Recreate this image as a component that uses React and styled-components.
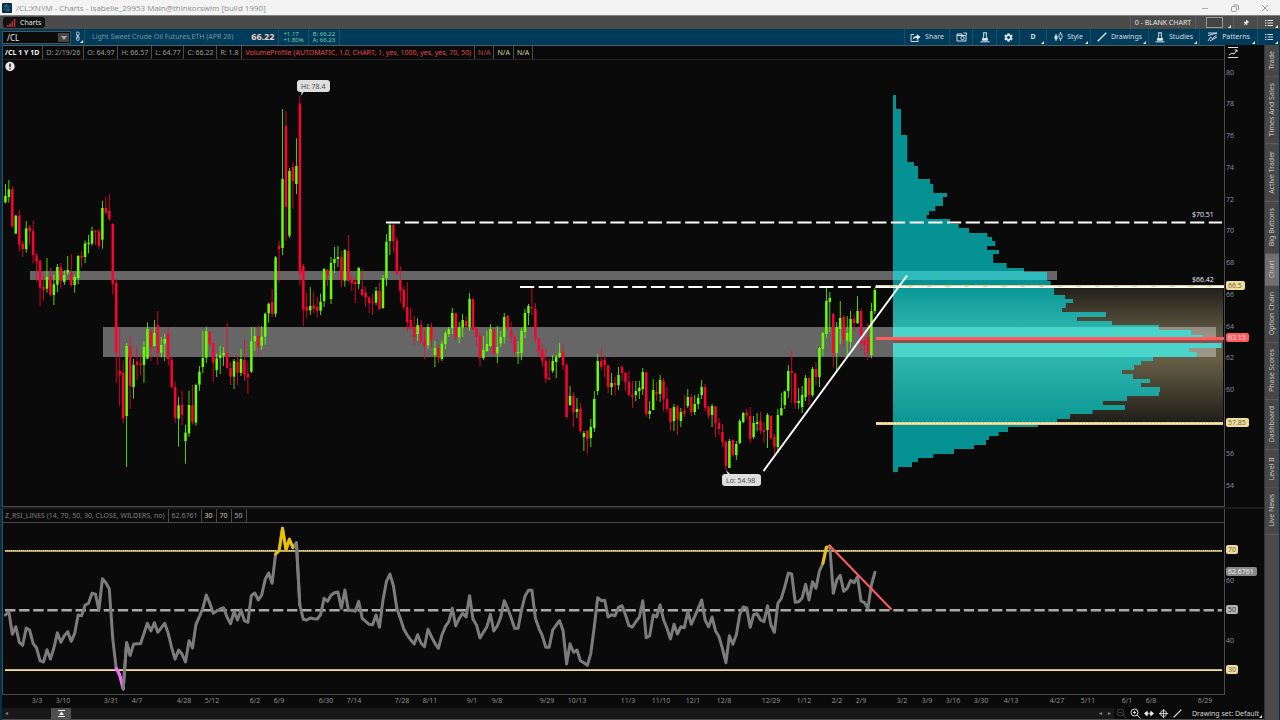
import React, { useState } from 'react';
import styled, { createGlobalStyle, css } from 'styled-components';
import { FaCog, FaThumbtack, FaListUl } from 'react-icons/fa';

const GlobalStyle = createGlobalStyle`
  * { box-sizing: border-box; }
  body {
    margin: 0;
    background: #0a0a0a;
    font-family: 'Noto Sans', 'Open Sans', sans-serif;
    font-size: 7px;
    line-height: 10px;
    color: #c8c8c8;
  }
  button, input {
    font: inherit;
    color: inherit;
    margin: 0;
    padding: 0;
    border: 0;
    background: none;
  }
  svg text { font-family: 'Open Sans', 'Noto Sans', sans-serif; }
`;

const Window = styled.div`
  display: flex;
  flex-direction: column;
  height: 100vh;
  overflow: hidden;
`;

const TitleBar = styled.header`
  display: flex;
  align-items: center;
  height: 15px;
  padding-left: 2px;
  background: #f3f3f3;
  color: #8c8c8c;
`;

const AppTitle = styled.h1`
  flex: 1;
  margin: 0 0 0 4px;
  font-family: 'Open Sans', sans-serif;
  font-size: 8px;
  font-weight: 400;
  line-height: 12px;
  white-space: nowrap;
`;

const WindowButton = styled.button`
  display: flex;
  align-items: center;
  justify-content: center;
  width: 30px;
  height: 15px;
`;

const TabBar = styled.nav`
  display: flex;
  align-items: stretch;
  height: 14px;
  border-top: 1px solid #7c8480;
  background: #4b4b4b;
`;

const ChartsTab = styled.button`
  display: flex;
  align-items: center;
  gap: 4px;
  height: 11px;
  margin: 1px 2px 0 3px;
  padding: 0 4px;
  border-radius: 3px;
  background: #121212;
  color: #e4e4e4;
`;

const Spacer = styled.div`
  flex: 1;
`;

const TabBarButton = styled.button`
  position: relative;
  display: flex;
  align-items: center;
  justify-content: center;
  width: ${(p) => p.$width}px;
  border-left: 1px solid #5c5c5c;
  color: #e2e2e2;
  white-space: nowrap;
`;

const Toolbar = styled.div`
  display: flex;
  align-items: stretch;
  height: 16px;
  background: #003b59;
  color: #b9c9d1;
`;

const SymbolField = styled.div`
  display: flex;
  width: 69px;
  height: 13px;
  margin: 2px 0 0 2px;
  padding: 1px;
  border: 1px solid #45555e;
  background: #0b0b0b;
`;

const SymbolInput = styled.input`
  flex: 1;
  min-width: 0;
  padding-left: 3px;
  color: #e8e8e8;
  font-size: 8px;
  outline: 0;
`;

const DropButton = styled.button`
  display: flex;
  align-items: center;
  justify-content: center;
  width: 11px;
  background: #464646;
`;

const ToolCell = styled.div`
  display: flex;
  flex-direction: column;
  justify-content: center;
  padding: 0 ${(p) => p.$right || 4}px 0 ${(p) => p.$left || 4}px;
  border-right: 1px solid ${(p) => (p.$open ? 'transparent' : '#14506c')};
  white-space: nowrap;
`;

const Instrument = styled.span`
  color: #7795a5;
`;

const LastPrice = styled.strong`
  color: #f3cdc8;
  font-size: 9px;
  line-height: 12px;
`;

const Quote = styled.span`
  color: #76cdb3;
  font-size: 6px;
  line-height: 6px;
`;

const ToolButton = styled.button`
  position: relative;
  display: flex;
  align-items: center;
  justify-content: center;
  gap: 4px;
  width: ${(p) => p.$width}px;
  border-left: 1px solid #14506c;
  color: #d3dde2;
  white-space: nowrap;
`;

const Corner = styled.span`
  position: absolute;
  right: 2px;
  bottom: 1px;
  border-left: 3px solid transparent;
  border-bottom: 3px solid #e6e6e6;
`;

const Workspace = styled.main`
  display: flex;
  flex: 1;
  min-height: 0;
  border-left: 2px solid #00304a;
  border-right: 1px solid #00304a;
`;

const ChartColumn = styled.section`
  display: flex;
  flex: 1;
  flex-direction: column;
  min-width: 0;
`;

const Panel = styled.div`
  display: flex;
  flex: ${(p) => p.$grow} 1 0;
  min-height: 0;
`;

const PlotColumn = styled.div`
  display: flex;
  flex: 1;
  flex-direction: column;
  min-width: 0;
  border: solid #4c4c4c;
  border-width: 0 1px 1px 1px;
`;

const Splitter = styled.div`
  height: 2px;
  background: #1c1c1c;
`;

const Legend = styled.div`
  display: flex;
  height: ${(p) => p.$height}px;
  border-bottom: 1px solid ${(p) => p.$line};
  ${(p) => p.$topLine && css`border-top: 1px solid #50606a;`}
`;

const LegendCell = styled.span`
  padding: 1px 3px 0 ${(p) => (p.$first ? 2 : 3)}px;
  border-right: 1px solid #4a4a4a;
  color: ${(p) => p.$color || '#9a9a9a'};
  font-weight: ${(p) => (p.$bold ? 700 : 400)};
  line-height: 11px;
  white-space: nowrap;
`;

const PlotSvg = styled.svg`
  display: block;
  flex: 1;
  width: 100%;
  min-height: 0;
`;

const AxisSvg = styled.svg`
  display: block;
  width: 39px;
  height: 100%;
`;

const TimeRow = styled.div`
  display: flex;
  height: 13px;
  padding: 0 40px 0 1px;
`;

const BottomBar = styled.footer`
  display: flex;
  align-items: center;
  height: 12px;
  border-bottom: 1px solid #4c4c4c;
`;

const ScrollTrack = styled.div`
  display: flex;
  flex: 1;
  align-items: center;
  height: 11px;
  background: #191919;
`;

const ScrollArrow = styled.button`
  width: 9px;
  height: 11px;
  color: #888;
  font-size: 6px;
  line-height: 9px;
`;

const ScrollThumb = styled.button`
  display: flex;
  align-items: center;
  justify-content: center;
  width: 20px;
  height: 11px;
  margin-left: 40px;
  background: #4f4f4f;
`;

const BottomButton = styled.button`
  display: flex;
  align-items: center;
  justify-content: center;
  width: 14px;
  height: 11px;
`;

const DrawingSet = styled.button`
  position: relative;
  width: 80px;
  height: 11px;
  padding-right: 5px;
  color: #d4d4d4;
  text-align: right;
  white-space: nowrap;
`;

const Sidebar = styled.aside`
  display: flex;
  flex-direction: column;
  width: 15px;
  border-left: 1px solid #333;
  background: #4a4a4a;
`;

const SideTab = styled.button`
  display: flex;
  align-items: center;
  width: 14px;
  padding: 7px 0 6px;
  border-top: 1px solid #5e5e5e;
  background: ${(p) => (p.$active ? '#707070' : '#474747')};
  color: #c4c4c4;
  line-height: 14px;
  writing-mode: vertical-rl;
  white-space: nowrap;
  transform: rotate(180deg);
`;

// First bar sits at x = 5.4, every next one 3.464 further.
const barX = (i) => 5.4 + i * 3.464;

// Bars as "direction high top bottom low", three units per plot unit,
// counted down from the base of their block.
const BAR_BLOCKS = [
  {
    base: 510,
    bars: `u42,78,97,100 u30,58,81,98 d48,58,170,173 u135,137,191,191 d120,137,224,245 d213,222,237,260
    u153,175,237,248 d165,172,183,224 d151,183,255,281 d249,256,275,335 d270,272,353,409 d318,351,360,392
    u264,321,356,368 d294,319,374,380 u315,343,375,405 u282,291,344,366 d279,292,335,356 u300,315,336,345
    u258,300,308,315 d252,309,345,350 u315,321,345,368 u255,258,324,342 d243,258,263,293 u211,220,261,279
    u195,218,222,250 u170,183,221,227 d180,183,186,224 d177,184,228,237 u93,114,209,236 d80,114,128,134
    d71,123,147,153 d160,162,342,374 d327,339,548,638 d470,603,614,708 d573,608,744,759 u519,528,738,891
    d498,528,648,717 u567,585,651,686 d531,575,584,630 d558,581,585,615 u513,531,585,638 u457,477,566,567
    d478,483,531,573 u450,489,528,530 d423,465,549,585 u501,525,548,563 u492,507,521,573 d471,491,567,587
    d560,569,651,654 d636,651,744,759 u681,706,746,830 d662,705,735,765 u765,788,813,881 u662,705,790,800
    d644,706,756,764 u641,645,758,767 u588,605,644,662 u483,564,591,609 u470,484,563,579 d483,485,521,528
    d518,519,578,636 u551,565,600,621 u528,556,564,612 u531,549,556,588 d459,549,594,597 d575,594,620,645
    u567,573,620,657 d555,576,608,645 u536,567,609,618 d510,570,614,633 d573,612,621,671 u471,514,605,609
    u471,498,514,543 d467,498,528,557 u468,500,527,540 u428,431,500,524 u398,401,430,458 d357,396,432,441
    u258,262,431,441 d213,227,237,338`,
  },
  {
    base: 210,
    bars: `u117,327,534,555 d123,168,411,512 u294,303,497,504 d276,291,333,416 u205,288,342,372 d78,101,614,645
    d582,588,719,768 d668,711,722,744 u651,708,721,735 d665,706,717,729 d681,711,722,743 u671,695,722,735
    u594,597,693,711 d597,600,615,648 u561,579,687,702 u531,567,579,609 u528,561,567,591 d543,562,630,651
    u537,540,632,650 d495,543,633,635 d617,630,640,663 d620,635,642,699 u591,594,642,657 d597,657,675,680
    d651,668,683,711 d678,683,699,729 d671,695,699,735 u651,663,698,705 d636,663,717,720 u615,624,714,717
    u492,515,624,648 u460,465,513,555 d460,465,513,548 d501,513,611,618 d588,630,663,698 d651,660,711,720
    d636,711,756,785 d714,750,777,780 d738,773,801,825 u745,765,792,813 d750,765,812,822 d780,809,828,867
    u762,771,826,837 d759,771,810,832 u813,834,855,891 d828,834,864,879 u812,821,867,873 u783,789,822,837
    u771,777,792,801 u714,729,774,792 d728,730,801,810 u756,772,801,819 u732,750,773,801 d740,753,768,774
    u669,687,771,783 d683,688,780,780 d773,775,801,831 d788,798,864,890 u798,840,864,870 u782,822,843,846
    u762,777,828,831 d777,778,852,855 u768,831,850,879 u783,801,820,831 u729,741,801,821 d735,738,776,783
    d757,782,801,819 d797,801,846,855 u813,846,850,882 u773,783,849,870 u717,729,786,804 u702,708,729,765
    d654,711,714,735 d699,717,807,816 d801,807,843,861`,
  },
  {
    base: 840,
    bars: `d190,210,243,261 d206,243,296,309 d234,294,298,300 u225,243,273,279 u225,231,246,294 u188,219,231,234
    d192,216,255,270 d250,255,411,414 u318,348,375,378 d336,348,396,441 u354,387,396,414 d369,387,453,459
    u453,459,471,513 d450,453,477,522 u417,441,474,501 u333,357,444,456 u222,243,333,345 d204,243,261,270
    d225,240,255,291 d255,256,321,339 u279,309,321,345 d291,309,316,346 u261,285,315,330 d255,261,279,303
    d276,279,306,333 d273,306,345,348 d303,345,351,384 u303,333,345,363 u303,324,333,357 u264,276,327,345
    d276,277,402,411 u363,393,402,417 u297,330,390,390 d306,336,342,363 u285,300,342,366 d294,303,357,393
    d321,357,387,396 d384,385,426,453 u372,381,423,453 d375,381,417,465 u384,396,423,441 d345,393,401,411
    u327,351,378,384 d342,351,396,408 u345,372,396,405 u342,354,372,387 u300,321,345,357 d312,321,384,393
    d378,381,405,417 u372,378,405,441 d378,379,429,471 d414,429,447,465 d432,456,486,501 d483,485,558,570
    u477,483,564,564 d478,480,525,531 u483,492,525,540 u417,423,489,492 u396,399,426,429 d387,399,405,417
    d381,408,477,489 u408,429,471,477 u399,426,432,453 d396,423,450,462 d426,450,456,489 u399,405,450,504
    d405,408,474,480 d462,471,500,525 u387,405,501,519 u339,384,405,408 u333,334,375,387 u255,273,333,354
    d213,273,279,369 d279,280,369,387 u324,363,369,387 u318,345,381,399 u285,294,351,363 d291,294,345,375
    u261,267,345,351 d246,267,291,315 u201,204,291,321 u156,159,207,228 u24,63,162,174 u36,54,66,156
    d99,102,219,261 u126,141,219,273 u63,114,147,192 d105,111,180,201 u108,159,182,229 u93,117,186,204
    d102,117,129,153 u48,93,129,132 d87,93,189,213 d171,183,195,225 d129,171,219,240 u69,93,225,234
    u24,30,93,102`,
  },
];

const BARS = BAR_BLOCKS.flatMap(({ base, bars }) =>
  bars.trim().split(/\s+/).map((bar) => ({
    up: bar[0] === 'u',
    y: bar.slice(1).split(',').map((v) => (base + Number(v)) / 3),
  }))
);

const RSI_BLOCKS = [
  {
    base: 1500,
    values: [
      345, 335, 403, 380, 427, 436, 384, 390, 430, 444, 482, 486, 449, 477, 444, 398, 427, 407, 395, 424, 400,
      345, 347, 315, 310, 280, 283, 330, 236, 248, 267, 418, 505, 525, 567, 428, 466, 433, 431, 431, 400, 370,
      393, 368, 397, 383, 370, 400, 443, 478, 450, 463, 486, 422, 444, 374, 350, 325, 285, 310, 340, 333, 327,
      323, 352, 371, 335, 360, 330, 362, 367, 287, 279, 300, 285, 238, 219, 250, 162, 152, 85, 150, 118, 143,
      128, 315, 358, 360, 354, 356, 357, 344, 295, 304, 286, 278, 276, 325, 270, 330, 331, 334, 304, 355, 364,
      373, 374, 345, 382, 300, 245, 222, 257, 325, 355, 387, 405, 420, 432, 404, 430, 440, 388, 410,
    ],
  },
  {
    base: 1560,
    values: [
      370, 385, 345, 320, 305, 265, 318, 295, 280, 291, 227, 298, 315, 354, 337, 320, 283, 333, 318, 290, 242,
      265, 293, 325, 325, 270, 228, 211, 211, 295, 325, 347, 382, 382, 330, 315, 302, 332, 432, 371, 397, 390,
      422, 428, 436, 400, 320, 233, 242, 241, 291, 284, 287, 262, 257, 285, 317, 321, 305, 292, 242, 353, 347,
      285, 291, 255, 300, 325, 357, 313, 342, 320, 323, 274, 313, 290, 265, 240, 300, 320, 291, 332, 350, 385,
      428, 347, 373, 345, 283, 261, 264, 322, 284, 281, 300, 305, 257, 315, 337, 250, 235, 200, 160, 162, 247,
      245, 234, 193, 240, 185, 205, 153, 130, 82, 78, 220, 180, 166, 214, 205, 181, 188, 170, 243, 248, 265,
      195, 157,
    ],
  },
];

const RSI = RSI_BLOCKS.flatMap(({ base, values }) => values.map((v) => (base + v) / 3));

const rsiPoints = (from, to) =>
  RSI.slice(from, to + 1).map((y, i) => `${barX(from + i).toFixed(1)},${y.toFixed(1)}`).join(' ');

// Volume at price: top of the step and its right end, same thirds as the bars.
const PROFILE = [
  [45, 108], [87, 123], [166, 142], [246, 162], [259, 174], [297, 210], [312, 220], [339, 261], [351, 249],
  [378, 226], [392, 207], [404, 200], [417, 270], [431, 296], [444, 327], [458, 382], [471, 396], [484, 406],
  [497, 381], [510, 417], [523, 399], [536, 400], [549, 440], [563, 492], [577, 561], [602, 572], [615, 582],
  [644, 615], [657, 639], [670, 617], [683, 606], [696, 738], [710, 651], [723, 756], [736, 897], [750, 994],
  [764, 1030], [777, 1090], [790, 1084], [804, 987], [816, 1010], [830, 879], [843, 843], [856, 822],
  [870, 786], [882, 819], [896, 870], [909, 843], [921, 900], [936, 897], [949, 801], [962, 728], [975, 795],
  [989, 697], [1002, 630], [1016, 591], [1029, 534], [1042, 444], [1055, 416], [1067, 387], [1081, 378],
  [1094, 342], [1107, 282], [1121, 220], [1134, 174], [1147, 156], [1160, 114],
];

const profilePath = () => {
  let d = 'M893 95';
  PROFILE.forEach(([top, right], i) => {
    const next = i + 1 < PROFILE.length ? PROFILE[i + 1][0] : 1176;
    d += `H${(860 + right / 3).toFixed(1)}V${Math.round(80 + next / 3)}`;
  });
  return `${d}H893Z`;
};

const PRICES = [80, 78, 76, 74, 72, 70, 68, 66, 64, 62, 60, 56, 54];

const DATES = [
  ['3/3', 37], ['3/10', 63], ['3/31', 111], ['4/7', 137], ['4/28', 184], ['5/12', 212], ['6/2', 255],
  ['6/9', 279], ['6/30', 326], ['7/14', 354], ['7/28', 402], ['8/11', 430], ['9/1', 472], ['9/8', 497],
  ['9/29', 547], ['10/13', 577], ['11/3', 628], ['11/10', 661], ['12/1', 693], ['12/8', 724], ['12/29', 771],
  ['1/12', 804], ['2/2', 837], ['2/9', 861], ['3/2', 902], ['3/9', 927], ['3/16', 953], ['3/30', 981],
  ['4/13', 1011], ['4/27', 1057], ['5/11', 1088], ['6/1', 1127], ['6/8', 1151], ['6/29', 1205],
];

const SIDE_TABS = [
  'Trade', 'Times And Sales', 'Active Trader', 'Big Buttons', 'Chart', 'Option Chain', 'Phase Scores',
  'Dashboard', 'Level II', 'Live News',
];

const LogoIcon = () => (
  <svg width="10" height="10" viewBox="0 0 10 10" aria-hidden="true">
    <rect width="10" height="10" rx="1" fill="#0a2b3c" />
    <path d="M5 1v8M1.5 3l7 4M8.5 3l-7 4M3 1.5l4 7" stroke="#2b93b5" strokeWidth=".8" />
    <circle cx="5" cy="5" r="1.6" fill="#0d516c" />
  </svg>
);

const BarsIcon = () => (
  <svg width="9" height="9" viewBox="0 0 9 9" aria-hidden="true">
    <path d="M.8 9V7M3 9V5.5M5.2 9V3.5M7.6 9V1" stroke="#d0342f" strokeWidth="1.4" />
  </svg>
);

const LinkIcon = () => (
  <svg width="9" height="12" viewBox="0 0 9 12" aria-hidden="true">
    <g fill="none" stroke="#c9d8df" strokeWidth=".9">
      <rect x="2.5" y="1" width="2.6" height="4" rx="1.3" />
      <rect x="2.5" y="5.5" width="2.6" height="4" rx="1.3" />
      <path d="M3.8 3.5v4" />
    </g>
    <path d="M9 9v3H6z" fill="#e6e6e6" />
  </svg>
);

const ShareIcon = () => (
  <svg width="11" height="9" viewBox="0 0 11 9" aria-hidden="true">
    <path d="M4 1.5H1v7h7V6.5" fill="none" stroke="#d3dde2" />
    <path d="M2.8 6.5C3 4 4.5 3 6.8 3V1l3.7 3-3.7 3V5C5 5 4 5.3 2.8 6.5z" fill="#e9eef0" />
  </svg>
);

const CalendarIcon = () => (
  <svg width="11" height="10" viewBox="0 0 11 10" aria-hidden="true">
    <path d="M1 2h5v1.5h4V9H1z" fill="none" stroke="#d3dde2" />
    <path d="M1 3.5h6" stroke="#d3dde2" />
    <circle cx="6.5" cy="6" r="1.7" fill="none" stroke="#d3dde2" />
    <path d="M7.5 1h3v2.2" fill="none" stroke="#d3dde2" />
  </svg>
);

const FlaskIcon = () => (
  <svg width="10" height="11" viewBox="0 0 10 11" aria-hidden="true">
    <path d="M3 .8h4M3.7 1v3.2L2.2 8h5.6L6.3 4.2V1" fill="none" stroke="#dbe4e8" />
    <path d="M3.2 6h3.6l1 2.5H2.2z" fill="#dbe4e8" />
    <path d="M.5 9.8h9" stroke="#dbe4e8" />
  </svg>
);

const StyleIcon = () => (
  <svg width="9" height="10" viewBox="0 0 9 10" aria-hidden="true">
    <path d="M2 2v7M6.5 0v9" stroke="#d3dde2" />
    <rect x=".5" y="3.5" width="3" height="4" rx="1" fill="#d3dde2" />
    <rect x="5" y="1.8" width="3" height="5" rx="1.2" fill="#003b59" stroke="#d3dde2" />
  </svg>
);

const LineIcon = ({ size = 10 }) => (
  <svg width={size} height={size} viewBox="0 0 10 10" aria-hidden="true">
    <path d="M.7 9.3L9.3.7" stroke="#e6e6e6" strokeWidth="1.3" />
  </svg>
);

const PatternsIcon = () => (
  <svg width="11" height="10" viewBox="0 0 11 10" aria-hidden="true">
    <path d="M1 1h9M1 3.5L10 1M1 9l2.5-4 2 1.6L9.5 3M3 9l7-4" fill="none" stroke="#d3dde2" />
  </svg>
);

const Badge = ({ y, width, fill, ink, children }) => (
  <g>
    <rect x="1" y={y - 5} width={width} height="9" rx="2" fill={fill} />
    <text x="3" y={y + 2} fontSize="7" fill={ink}>{children}</text>
  </g>
);

const Candles = () => (
  <g>
    {BARS.map(({ up, y: [high, top, bottom, low] }, i) => (
      <g key={i} fill={up ? '#66ff00' : '#ff0033'}>
        <rect x={barX(i) - 0.4} y={high} width="0.8" height={low - high} />
        <rect x={barX(i) - 1.25} y={top} width="2.5" height={Math.max(bottom - top, 1)} />
      </g>
    ))}
  </g>
);

const PricePlot = () => (
  <PlotSvg viewBox="3 60 1221 446" preserveAspectRatio="none" role="img" aria-label="Crude oil daily price">
    <defs>
      <linearGradient id="valueArea" x1="0" y1="0" x2="0" y2="1">
        <stop offset="0" stopColor="#211f1a" />
        <stop offset="0.4" stopColor="#6b6249" />
        <stop offset="0.55" stopColor="#655c44" />
        <stop offset="1" stopColor="#1f1d19" />
      </linearGradient>
      <linearGradient id="profileValue" x1="0" y1="0" x2="0" y2="1">
        <stop offset="0" stopColor="#0b9796" />
        <stop offset="0.4" stopColor="#35beb5" />
        <stop offset="0.5" stopColor="#2fb8af" />
        <stop offset="1" stopColor="#0b9694" />
      </linearGradient>
      <clipPath id="profileClip"><path d={profilePath()} /></clipPath>
    </defs>

    <rect x="894" y="287" width="329" height="136" fill="url(#valueArea)" />
    <rect x="30" y="271" width="1027" height="9" fill="#666" />
    <rect x="103" y="327" width="791" height="30" fill="#666" />
    <rect x="894" y="327" width="322" height="30" fill="#fff" opacity="0.35" />

    <g clipPath="url(#profileClip)">
      <rect x="893" y="95" width="330" height="377" fill="#069193" />
      <rect x="893" y="287" width="330" height="136" fill="url(#profileValue)" />
      <rect x="893" y="271" width="330" height="9" fill="#30bcbd" />
      <rect x="893" y="327" width="330" height="30" fill="#49d5ca" />
    </g>

    <Candles />

    <rect x="893" y="340" width="330" height="3" fill="#934a48" />
    <rect x="876" y="337" width="348" height="3" fill="#ff5c5f" />
    <rect x="876" y="422" width="347" height="3" fill="#e2cf8e" />
    <path d="M876 423.5H1223" stroke="#fff2b8" strokeDasharray="2 1" />
    <rect x="876" y="285" width="348" height="2" fill="#e2cf8e" />
    <rect x="876" y="287" width="348" height="1" fill="#fff" />
    <path d="M386 222.5H1222" stroke="#fff" strokeWidth="2" strokeDasharray="14.2 4.5" />
    <path d="M520 287H1224" stroke="#fff" strokeWidth="2" strokeDasharray="14.2 4.5" />
    <path d="M763.5 471L907 275.5" stroke="#fff" strokeWidth="2" />

    <text x="1192" y="217" fontSize="7" fill="#e8ecff">$70.51</text>
    <text x="1192" y="282" fontSize="7" fill="#e8ecff">$66.42</text>

    <path d="M302 91l-1.5 5 4-5z" fill="#dedede" />
    <rect x="297" y="80" width="33" height="12" rx="3" fill="#dedede" />
    <text x="301" y="89" fontSize="7" fill="#444">Hi: 78.4</text>
    <path d="M726 470l5 5h-3z" fill="#dedede" />
    <rect x="722" y="474" width="39" height="12" rx="3" fill="#dedede" />
    <text x="726" y="483" fontSize="7" fill="#444">Lo: 54.98</text>

    <circle cx="10" cy="66.5" r="4.7" fill="#e8e8e8" />
    <path d="M10 63.5v3.7M10 68.3v1.3" stroke="#111" strokeWidth="1.4" />
  </PlotSvg>
);

const PriceAxis = () => (
  <AxisSvg viewBox="0 45 39 462" preserveAspectRatio="none" role="img" aria-label="Price scale">
    <path d="M3 47.5h10M3 57.5h10M4 55l3-2 2 1 3-4M9.5 50H12v2" fill="none" stroke="#ddd" />
    {PRICES.map((price) => (
      <text key={price} x="1" y={74.5 + (80 - price) * 15.885} fontSize="7" fill="#8a949e">{price}</text>
    ))}
    <Badge y={286} width="19" fill="#f0dd9c" ink="#6b6040">66.5</Badge>
    <Badge y={338} width="23" fill="#ff5a5c" ink="#ffe6e0">63.15</Badge>
    <Badge y={423} width="23" fill="#f0dd9c" ink="#6b6040">57.85</Badge>
  </AxisSvg>
);

const RsiPlot = () => (
  <PlotSvg viewBox="3 523 1221 171" preserveAspectRatio="none" role="img" aria-label="Relative strength index">
    <rect x="5" y="550" width="1217" height="2" fill="#b5a368" />
    <path d="M5 550.5H1222" stroke="#e4d9a8" strokeDasharray="1 1" />
    <rect x="5" y="669" width="1217" height="2" fill="#c9b36f" />
    <path d="M5 670.5H1222" stroke="#f5dea0" />
    <path d="M5 610.3H1222" stroke="#aaa" strokeWidth="2.4" strokeDasharray="10.4 3.7" />
    <g fill="none" strokeWidth="3" strokeLinejoin="round" strokeLinecap="round">
      <polyline points={rsiPoints(0, RSI.length - 1)} stroke="#7c7c7c" />
      <polyline points={rsiPoints(32, 34)} stroke="#ff66ff" />
      <polyline points={rsiPoints(34, 36)} stroke="#7c7c7c" />
      <polyline points={rsiPoints(78, 83)} stroke="#ebc000" />
      <polyline points={rsiPoints(236, 237)} stroke="#ebc000" />
      <polyline points={rsiPoints(84, 85)} stroke="#7c7c7c" />
    </g>
    <path d="M829 545L891.5 609.5" stroke="#ff5c5f" strokeWidth="2" />
  </PlotSvg>
);

const RsiAxis = () => (
  <AxisSvg viewBox="0 509 39 186" preserveAspectRatio="none" role="img" aria-label="RSI scale">
    <text x="1" y="583" fontSize="7" fill="#8a949e">60</text>
    <text x="1" y="643" fontSize="7" fill="#8a949e">40</text>
    <Badge y={550} width="12" fill="#f0dd9c" ink="#6b6040">70</Badge>
    <Badge y={572} width="31" fill="#8a8a8a" ink="#f0f0f0">62.6761</Badge>
    <Badge y={610} width="12" fill="#b4b4b4" ink="#333">50</Badge>
    <Badge y={670} width="12" fill="#f0dd9c" ink="#6b6040">30</Badge>
  </AxisSvg>
);

const App = () => {
  const [symbol, setSymbol] = useState('/CL');
  const [activeTab, setActiveTab] = useState('Chart');

  return (
    <Window>
      <GlobalStyle />
      <TitleBar>
        <LogoIcon />
        <AppTitle>/CL:XNYM - Charts - Isabelle_29953 Main@thinkorswim [build 1990]</AppTitle>
        <WindowButton aria-label="Minimize">
          <svg width="8" height="8" viewBox="0 0 8 8"><path d="M1 4.5h6" stroke="#aaa" /></svg>
        </WindowButton>
        <WindowButton aria-label="Restore">
          <svg width="8" height="8" viewBox="0 0 8 8" fill="none" stroke="#999">
            <rect x=".5" y="2.5" width="5" height="5" rx="1" />
            <path d="M2.5 1h4a1 1 0 0 1 1 1v4" />
          </svg>
        </WindowButton>
        <WindowButton aria-label="Close">
          <svg width="8" height="8" viewBox="0 0 8 8"><path d="M1 1l6 6M7 1L1 7" stroke="#999" /></svg>
        </WindowButton>
      </TitleBar>

      <TabBar>
        <ChartsTab><BarsIcon />Charts</ChartsTab>
        <Spacer />
        <TabBarButton $width={65}>0 - BLANK CHART</TabBarButton>
        <TabBarButton $width={38} aria-label="Layout grid">
          <svg width="17" height="11" viewBox="0 0 17 11">
            <rect x=".5" y=".5" width="16" height="10" fill="#444" stroke="#999" />
          </svg>
          <Corner />
        </TabBarButton>
        <TabBarButton $width={24} aria-label="Pin"><FaThumbtack size={6} transform="rotate(40)" /></TabBarButton>
        <TabBarButton $width={23} aria-label="Menu"><FaListUl size={8} /><Corner /></TabBarButton>
      </TabBar>

      <Toolbar>
        <SymbolField>
          <SymbolInput aria-label="Symbol" value={symbol} onChange={(e) => setSymbol(e.target.value)} />
          <DropButton aria-label="Symbol list">
            <svg width="6" height="4" viewBox="0 0 6 4"><path d="M0 0h6L3 4z" fill="#aaa" /></svg>
          </DropButton>
        </SymbolField>
        <ToolCell $left={3} $right={1}><LinkIcon /></ToolCell>
        <ToolCell $left={7} $right={14} $open><Instrument>Light Sweet Crude Oil Futures,ETH (APR 26)</Instrument></ToolCell>
        <ToolCell $left={3}><LastPrice>66.22</LastPrice></ToolCell>
        <ToolCell><Quote>+1.17</Quote><Quote>+1.80%</Quote></ToolCell>
        <ToolCell><Quote>B: 66.22</Quote><Quote>A: 66.23</Quote></ToolCell>
        <Spacer />
        <ToolButton $width={45}><ShareIcon />Share</ToolButton>
        <ToolButton $width={23} aria-label="Calendar"><CalendarIcon /></ToolButton>
        <ToolButton $width={24} aria-label="Edit studies"><FlaskIcon /></ToolButton>
        <ToolButton $width={23} aria-label="Settings"><FaCog size={9} /></ToolButton>
        <ToolButton $width={27}><b>D</b><Corner /></ToolButton>
        <ToolButton $width={44}><StyleIcon />Style<Corner /></ToolButton>
        <ToolButton $width={58}><LineIcon />Drawings<Corner /></ToolButton>
        <ToolButton $width={51}><FlaskIcon />Studies<Corner /></ToolButton>
        <ToolButton $width={58}><PatternsIcon />Patterns<Corner /></ToolButton>
        <ToolButton $width={23} aria-label="More"><FaListUl size={8} /><Corner /></ToolButton>
      </Toolbar>

      <Workspace>
        <ChartColumn>
          <Panel $grow={462}>
            <PlotColumn>
              <Legend $height={15} $line="#262626" $topLine>
                <LegendCell $first $bold $color="#f2f2f2">/CL 1 Y 1D</LegendCell>
                <LegendCell>D: 2/19/26</LegendCell>
                <LegendCell>O: 64.97</LegendCell>
                <LegendCell>H: 66.57</LegendCell>
                <LegendCell>L: 64.77</LegendCell>
                <LegendCell>C: 66.22</LegendCell>
                <LegendCell>R: 1.8</LegendCell>
                <LegendCell $color="#e0474a">
                  VolumeProfile (AUTOMATIC, 1.0, CHART, 1, yes, 1000, yes, yes, 70, 50)
                </LegendCell>
                <LegendCell $color="#c04044">N/A</LegendCell>
                <LegendCell $color="#d8cf9c">N/A</LegendCell>
                <LegendCell $color="#d8cf9c">N/A</LegendCell>
              </Legend>
              <PricePlot />
            </PlotColumn>
            <PriceAxis />
          </Panel>
          <Splitter />
          <Panel $grow={186}>
            <PlotColumn>
              <Legend $height={14} $line="#4c4c4c">
                <LegendCell $first $color="#808080">Z_RSI_LINES (14, 70, 50, 30, CLOSE, WILDERS, no)</LegendCell>
                <LegendCell $color="#808080">62.6761</LegendCell>
                <LegendCell $color="#e0dcae">30</LegendCell>
                <LegendCell $color="#d0cba4">70</LegendCell>
                <LegendCell $color="#a9b3ba">50</LegendCell>
              </Legend>
              <RsiPlot />
            </PlotColumn>
            <RsiAxis />
          </Panel>
          <TimeRow>
            <PlotSvg viewBox="3 695 1221 13" preserveAspectRatio="none" role="img" aria-label="Dates">
              {DATES.map(([label, x]) => (
                <text key={label} x={x} y="703" fontSize="7" fill="#969696" textAnchor="middle">{label}</text>
              ))}
            </PlotSvg>
          </TimeRow>
          <BottomBar>
            <ScrollTrack>
              <ScrollArrow aria-label="Scroll to start">◂</ScrollArrow>
              <ScrollThumb aria-label="Expand panel">
                <svg width="7" height="7" viewBox="0 0 7 7">
                  <path d="M0 .5h7M0 6.5h7" stroke="#eee" />
                  <path d="M3.5 1.5L6 5H1z" fill="#eee" />
                </svg>
              </ScrollThumb>
              <Spacer />
              <ScrollArrow aria-label="Scroll left">◂</ScrollArrow>
              <ScrollArrow aria-label="Scroll right">▸</ScrollArrow>
            </ScrollTrack>
            <BottomButton aria-label="Zoom out">
              <svg width="11" height="11" viewBox="0 0 11 11" fill="none" stroke="#444">
                <circle cx="4.5" cy="4.5" r="3.5" /><path d="M7 7l3.5 3.5M3 4.5h3" />
              </svg>
            </BottomButton>
            <BottomButton aria-label="Zoom in">
              <svg width="11" height="11" viewBox="0 0 11 11" fill="none" stroke="#ddd">
                <circle cx="4.5" cy="4.5" r="3.5" /><path d="M7 7l3.5 3.5M3 4.5h3M4.5 3v3" />
              </svg>
            </BottomButton>
            <BottomButton aria-label="Fit width">
              <svg width="10" height="7" viewBox="0 0 10 7" fill="#eee">
                <path d="M0 3.5L3.5.5v2h3v-2L10 3.5l-3.5 3v-2h-3v2z" /><path d="M5 0v7" stroke="#0a0a0a" />
              </svg>
            </BottomButton>
            <BottomButton aria-label="Crosshair">
              <svg width="9" height="9" viewBox="0 0 9 9" fill="none" stroke="#ccc">
                <circle cx="4.5" cy="4.5" r="3" /><path d="M4.5 0v9M0 4.5h9" />
              </svg>
            </BottomButton>
            <BottomButton aria-label="Draw line"><LineIcon size={9} /></BottomButton>
            <DrawingSet>Drawing set: Default<Corner /></DrawingSet>
          </BottomBar>
        </ChartColumn>

        <Sidebar>
          {SIDE_TABS.map((tab) => (
            <SideTab key={tab} $active={tab === activeTab} onClick={() => setActiveTab(tab)}>{tab}</SideTab>
          ))}
        </Sidebar>
      </Workspace>
    </Window>
  );
};

export default App;
